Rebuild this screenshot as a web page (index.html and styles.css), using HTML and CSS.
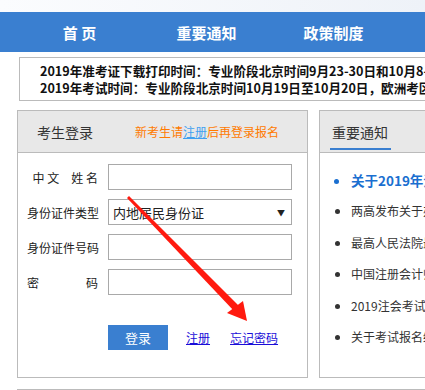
FILE: index.html
```html
<!DOCTYPE html>
<html lang="zh-CN">
<head>
    <meta charset="UTF-8">
    <meta name="viewport" content="width=device-width, initial-scale=1.0">
    <title>考生登录</title>
    <link rel="stylesheet" href="styles.css">
</head>
<body>
    <div class="top-strip"></div>

    <!-- Main navigation -->
    <div class="nav">
        <a href="#" class="nav-item">首 页</a>
        <a href="#" class="nav-item">重要通知</a>
        <a href="#" class="nav-item">政策制度</a>
    </div>

    <!-- Notice box -->
    <div class="notice">
        <p>2019年准考证下载打印时间：专业阶段北京时间9月23-30日和10月8-16日</p>
        <p>2019年考试时间：专业阶段北京时间10月19日至10月20日，欧洲考区比利时</p>
    </div>

    <div class="main">
        <!-- Login panel -->
        <div class="panel login-panel">
            <div class="panel-head">
                <span class="panel-title">考生登录</span>
                <span class="register-tip">新考生请<a href="#">注册</a>后再登录报名</span>
            </div>
            <div class="login-form">
                <div class="form-row">
                    <label class="form-label">中 文　姓 名</label>
                    <input type="text" class="form-input">
                </div>
                <div class="form-row">
                    <label class="form-label">身份证件类型</label>
                    <div class="form-input form-select">
                        <span>内地居民身份证</span>
                        <span class="select-arrow">▼</span>
                    </div>
                </div>
                <div class="form-row">
                    <label class="form-label">身份证件号码</label>
                    <input type="text" class="form-input">
                </div>
                <div class="form-row">
                    <label class="form-label spread"><span>密</span><span>码</span></label>
                    <input type="password" class="form-input">
                </div>
                <div class="form-actions">
                    <button class="login-button">登录</button>
                    <a href="#" class="form-link">注册</a>
                    <a href="#" class="form-link">忘记密码</a>
                </div>
            </div>
        </div>

        <!-- News panel -->
        <div class="panel news-panel">
            <div class="panel-head">
                <span class="panel-title news-title">重要通知</span>
            </div>
            <ul class="news-list">
                <li class="news-top">关于2019年注册会计师全国统一考试</li>
                <li>两高发布关于办理非法行医刑事案件</li>
                <li>最高人民法院最高人民检察院关于</li>
                <li>中国注册会计师协会关于做好考试</li>
                <li>2019注会考试报名简章发布</li>
                <li>关于考试报名缴费的重要提示</li>
            </ul>
        </div>
    </div>

    <div class="bottom-panel"></div>

    <!-- Red marker arrow over the form -->
    <svg class="marker-arrow" width="425" height="390" viewBox="0 0 425 390">
        <polygon points="127,198 129,196 239,306 234,311" fill="#ff1a0f"/>
        <polygon points="227,313 243,301 247,321" fill="#ff1a0f"/>
    </svg>
</body>
</html>
```

FILE: styles.css
```css
body {
    font-family: "Noto Sans CJK SC", "Liberation Sans", sans-serif;
    margin: 0;
    padding: 0;
    width: 425px;
    height: 390px;
    overflow: hidden;
    background: #fff;
    color: #333;
    position: relative;
}
.top-strip {
    height: 12px;
    background: linear-gradient(to right, #fbfcfe, #eef2f8);
}
.nav {
    height: 40px;
    background-color: #3a7fd0;
    display: flex;
    align-items: center;
    padding-left: 16px;
}
.nav-item {
    width: 127px;
    text-align: center;
    color: #fff;
    font-size: 15px;
    font-weight: bold;
    text-decoration: none;
}
.notice {
    margin: 5px 0 0 19px;
    height: 44px;
    border: 1px solid #bbb;
    border-right: none;
    padding: 4px 0 0 20px;
    box-sizing: border-box;
    white-space: nowrap;
    overflow: hidden;
}
.notice p {
    margin: 0;
    font-size: 12.6px;
    font-weight: bold;
    color: #111;
    line-height: 17px;
}
.main {
    display: flex;
    gap: 11px;
    margin-top: 9px;
    padding-left: 17px;
}
.panel {
    border: 1px solid #bbb;
    height: 268px;
    box-sizing: border-box;
    flex-shrink: 0;
}
.login-panel {
    width: 291px;
}
.news-panel {
    width: 200px;
    border-right: none;
    overflow: hidden;
}
.panel-head {
    height: 41px;
    background: #e8e8e8;
    border-bottom: 1px solid #bbb;
    display: flex;
    align-items: center;
    padding-left: 19px;
    position: relative;
}
.panel-title {
    font-size: 14px;
    color: #333;
}
.register-tip {
    margin-left: 42px;
    font-size: 12px;
    color: #ff7a00;
}
.register-tip a {
    color: #3fa0f0;
    text-decoration: underline;
}
.login-form {
    padding-top: 11px;
}
.form-row {
    display: flex;
    align-items: center;
    height: 26px;
    margin-bottom: 9px;
}
.form-label {
    width: 71px;
    margin-left: 9px;
    margin-right: 10px;
    text-align: right;
    font-size: 12px;
    color: #222;
    white-space: nowrap;
}
.form-label.spread {
    display: flex;
    justify-content: space-between;
}
.form-input {
    width: 184px;
    height: 26px;
    box-sizing: border-box;
    border: 1px solid #a9a9a9;
    margin: 0;
    padding: 0 4px;
    font-family: inherit;
}
.form-select {
    display: flex;
    align-items: center;
    justify-content: space-between;
    font-size: 13px;
    color: #222;
    padding-right: 6px;
}
.select-arrow {
    font-size: 8px;
}
.form-actions {
    display: flex;
    align-items: center;
    padding-left: 90px;
    margin-top: 30px;
}
.login-button {
    width: 60px;
    height: 25px;
    background-color: #3a7fd0;
    color: #fff;
    border: none;
    font-family: inherit;
    font-size: 13px;
    margin-right: 18px;
    padding: 0;
}
.form-link {
    font-size: 12px;
    color: #1a0dd8;
    text-decoration: underline;
    margin-right: 20px;
}
.news-panel .panel-head {
    padding-left: 12px;
}
.news-title::after {
    content: "";
    position: absolute;
    left: 10px;
    bottom: 2px;
    width: 61px;
    height: 2px;
    background: #3a7fd0;
}
.news-list {
    margin: 0;
    padding: 18px 0 0 31px;
    white-space: nowrap;
}
.news-list li {
    font-size: 12px;
    color: #333;
    height: 18px;
    line-height: 18px;
    margin-bottom: 13.4px;
}
.news-list li.news-top {
    font-size: 13.5px;
    font-weight: bold;
    color: #1a6fd0;
}
.bottom-panel {
    margin: 11px 0 0 17px;
    border-top: 1px solid #bbb;
    height: 10px;
}
.marker-arrow {
    position: absolute;
    left: 0;
    top: 0;
    pointer-events: none;
}
```
